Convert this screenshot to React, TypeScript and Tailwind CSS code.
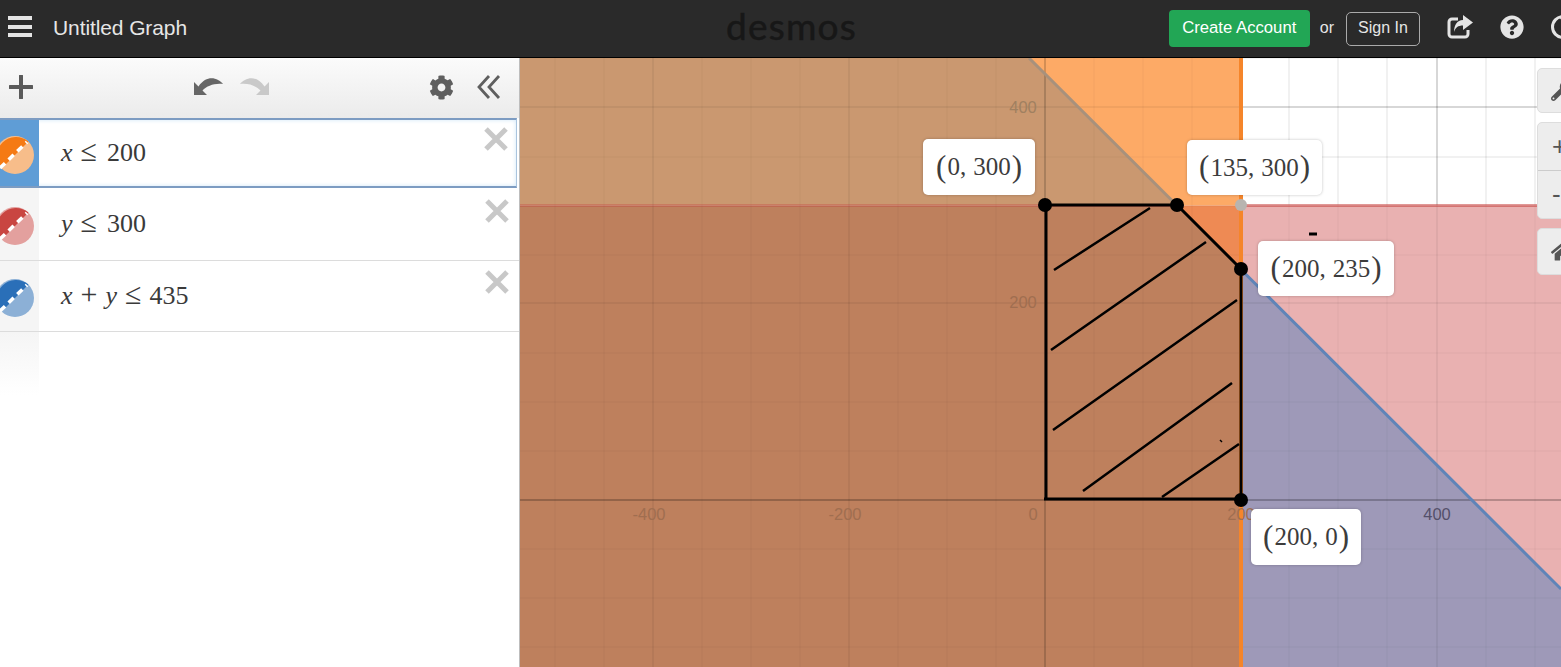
import { FaCog, FaHome, FaQuestionCircle, FaWrench } from "react-icons/fa";

const serif = "font-['Liberation_Serif',serif]";

function Swatch({ dark, light }: { dark: string; light: string }) {
  return (
    <svg width="39" height="38" viewBox="0 0 39 38" className="block">
      <circle cx="15" cy="19" r="19" fill={light} />
      <path d="M1.6 32.4A19 19 0 0 1 28.4 5.6Z" fill={dark} />
      <line x1="0" y1="32" x2="27" y2="6" stroke="#fff" strokeWidth="3.5" strokeDasharray="7 5" />
    </svg>
  );
}

function Close() {
  return (
    <svg width="26" height="26" viewBox="0 0 26 26" className="block">
      <path d="M3 3L23 23M23 3L3 23" stroke="#c8c8c8" strokeWidth="5" />
    </svg>
  );
}

function Row({ strip, dark, light, children, className, pad }: { strip: string; dark: string; light: string; children: React.ReactNode; className: string; pad: string }) {
  return (
    <div className={`flex ${className}`}>
      <div className={`w-[39px] shrink-0 flex items-center pt-[4px] ${strip}`}>
        <Swatch dark={dark} light={light} />
      </div>
      <div className={`flex-1 flex items-center pl-[22px] pb-[2px] text-[26px] text-[#3a3a3a] ${serif}`}>{children}</div>
      <div className={`w-[44px] shrink-0 ${pad}`}>
        <Close />
      </div>
    </div>
  );
}

function Op({ children }: { children: React.ReactNode }) {
  return <span className="mx-[8px] text-[30px] leading-none">{children}</span>;
}

function PointLabel({ a, b, className }: { a: string; b: string; className: string }) {
  return (
    <div className={`absolute flex items-center justify-center bg-white rounded-[5px] shadow-[0_0_3px_rgba(0,0,0,0.25)] text-[25px] text-[#3c3c3c] ${serif} ${className}`}>
      <span className="text-[31px] leading-none -translate-y-[1px]">(</span>
      <span className="ml-[1px]">{a},</span>
      <span className="ml-[7px] mr-[1px]">{b}</span>
      <span className="text-[31px] leading-none -translate-y-[1px]">)</span>
    </div>
  );
}

const vMinor = [555, 604, 702, 751, 800, 898, 947, 996, 1094, 1143, 1192, 1289, 1338, 1387, 1486, 1535];
const vMajor = [653, 849, 1241, 1437];
const hMinor = [451, 402, 353, 255, 206, 157, 58, 549, 598, 647];
const hMajor = [303, 107];

export default function App() {
  return (
    <div className="w-[1561px] h-[667px] overflow-hidden flex flex-col bg-white font-['Liberation_Sans',sans-serif]">
      <header className="h-[58px] shrink-0 flex items-center bg-[#2a2a2a] border-b border-black relative">
        <div className="w-[24px] ml-[8px] mb-[4px] flex flex-col gap-[4.5px]">
          <div className="h-[4px] bg-[#e4e4e4]" />
          <div className="h-[4px] bg-[#e4e4e4]" />
          <div className="h-[4px] bg-[#e4e4e4]" />
        </div>
        <span className="ml-[21px] mb-[2px] text-[21px] tracking-[-0.1px] text-[#e6e6e6]">Untitled Graph</span>
        <span className="absolute left-[726px] top-[3px] text-[37px] leading-[46px] tracking-[1.2px] text-[#171717] [-webkit-text-stroke:0.5px_#171717] font-['Lato',sans-serif]">desmos</span>
        <div className="ml-auto flex items-center">
          <div className="w-[141px] h-[37px] mb-[1px] flex items-center justify-center rounded-[4px] bg-[#22a655] text-white text-[16.7px]">Create Account</div>
          <span className="ml-[10px] mb-[1px] text-[16px] text-[#e6e6e6]">or</span>
          <div className="ml-[12px] w-[74px] h-[34px] pb-[1px] flex items-center justify-center rounded-[5px] border border-[#aaa] text-[16px] text-[#e6e6e6]">Sign In</div>
          <svg width="26" height="24" viewBox="0 0 26 24" className="ml-[27px] mb-[3px]">
            <path d="M11 4H5A3 3 0 0 0 2 7V19A3 3 0 0 0 5 22H18A3 3 0 0 0 21 19V15" fill="none" stroke="#e4e4e4" strokeWidth="3" />
            <path d="M16 0L26 7.5L16 15V10.5C11 10.5 8.5 12.5 7 17C7 10 10 5 16 5Z" fill="#e4e4e4" />
          </svg>
          <FaQuestionCircle className="ml-[27px] mb-[3px] text-[#e4e4e4]" size={24} />
          <svg width="10" height="24" viewBox="0 0 10 24" className="ml-[27px] mb-[3px]">
            <circle cx="12" cy="12" r="10.5" fill="none" stroke="#e4e4e4" strokeWidth="3" />
            <path d="M8 2L13 2L13 8Z" fill="#e4e4e4" />
          </svg>
        </div>
      </header>
      <main className="flex-1 flex min-h-0">
        <aside className="w-[520px] shrink-0 flex flex-col bg-white border-r border-[#bdbdbd] z-10">
          <div className="h-[60px] flex items-center bg-gradient-to-b from-[#fbfbfb] to-[#ebebeb] pb-[2px]">
            <svg width="24" height="24" viewBox="0 0 24 24" className="ml-[9px]">
              <path d="M12 1V23M1 12H23" stroke="#5a5a5a" strokeWidth="4" strokeLinecap="round" />
            </svg>
            <svg width="30" height="18" viewBox="0 0 30 18" className="ml-[160px] mb-[2px]">
              <path d="M1 5V18H14L9.5 13.5C14 9 21 6 30 7C25 1 14 -3 5.5 9.5Z" fill="#666" />
            </svg>
            <svg width="30" height="18" viewBox="0 0 30 18" className="ml-[17px] mb-[2px] -scale-x-100">
              <path d="M1 5V18H14L9.5 13.5C14 9 21 6 30 7C25 1 14 -3 5.5 9.5Z" fill="#c9c9c9" />
            </svg>
            <FaCog className="ml-[159px] text-[#5f5f5f]" size={25} />
            <svg width="24" height="26" viewBox="0 0 24 26" className="ml-[23px]">
              <path d="M12 2L2 13L12 24M22 2L12 13L22 24" fill="none" stroke="#5f5f5f" strokeWidth="2.8" />
            </svg>
          </div>
          <Row strip="bg-[#5f9dd6]" dark="#f57a14" light="#f7bd8a" className="h-[70px] mr-[2px] border-y-2 border-[#7d9cc2] border-r border-r-[#a9c4de] shadow-[inset_0_0_4px_#cfe6f7]" pad="pt-[6px] pl-[11px]">
            <span><i>x</i><Op>≤</Op><span className="ml-[2px]">200</span></span>
          </Row>
          <Row strip="bg-[#f5f5f5]" dark="#c94541" light="#e3a09e" className="h-[73px] border-b border-[#dcdcdc]" pad="pt-[10px] pl-[9px]">
            <span><i>y</i><Op>≤</Op><span className="ml-[2px]">300</span></span>
          </Row>
          <Row strip="bg-[#f5f5f5]" dark="#2a6fb8" light="#8cb0d6" className="h-[71px] border-b border-[#dcdcdc]" pad="pt-[8px] pl-[9px]">
            <span><i>x</i><Op>+</Op><i>y</i><Op>≤</Op>435</span>
          </Row>
          <div className="h-[63px] w-[39px] bg-gradient-to-b from-[#f5f5f5] to-white" />
        </aside>
        <section className="flex-1 relative overflow-hidden">
          <svg width="1041" height="609" viewBox="520 58 1041 609" className="block">
            <rect x="520" y="58" width="1041" height="609" fill="#fff" />
            <polygon points="520,58 1029,58 1177,205.5 520,205.5" fill="#ca9870" />
            <polygon points="1029,58 1241,58 1241,205.5 1177,205.5" fill="#fdaa66" />
            <polygon points="520,205.5 1177,205.5 1241,269.5 1241,667 520,667" fill="#be805d" />
            <polygon points="1177,205.5 1241,205.5 1241,269.5" fill="#ee8a54" />
            <polygon points="1241,205.5 1561,205.5 1561,589 1241,269.5" fill="#e9b1b1" />
            <polygon points="1241,269.5 1561,589 1561,667 1241,667" fill="#9e99b8" />
            {vMinor.map((x) => <line key={x} x1={x} x2={x} y1="58" y2="667" stroke="#000" strokeOpacity="0.04" />)}
            {hMinor.map((y) => <line key={y} x1="520" x2="1561" y1={y} y2={y} stroke="#000" strokeOpacity="0.04" />)}
            {vMinor.filter((x) => x > 1241).map((x) => <line key={x} x1={x} x2={x} y1="58" y2="205" stroke="#000" strokeOpacity="0.07" />)}
            {hMinor.filter((y) => y < 205).map((y) => <line key={y} x1="1243" x2="1561" y1={y} y2={y} stroke="#000" strokeOpacity="0.07" />)}
            {vMajor.map((x) => <line key={x} x1={x} x2={x} y1="58" y2="667" stroke="#000" strokeOpacity="0.1" />)}
            {hMajor.map((y) => <line key={y} x1="520" x2="1561" y1={y} y2={y} stroke="#000" strokeOpacity="0.1" />)}
            <line x1="1437" x2="1437" y1="58" y2="205" stroke="#000" strokeOpacity="0.22" />
            <line x1="1243" x2="1561" y1="107" y2="107" stroke="#000" strokeOpacity="0.22" />
            <line x1="1045" x2="1045" y1="58" y2="667" stroke="#000" strokeOpacity="0.22" strokeWidth="1.5" />
            <line x1="520" x2="1561" y1="500" y2="500" stroke="#000" strokeOpacity="0.3" strokeWidth="1.5" />
            <line x1="520" x2="1177" y1="205.5" y2="205.5" stroke="#c74440" strokeOpacity="0.35" strokeWidth="3" />
            <line x1="1241" x2="1561" y1="205.5" y2="205.5" stroke="#c74440" strokeOpacity="0.55" strokeWidth="3" />
            <line x1="1029" y1="58" x2="1177" y2="205.5" stroke="#a8917c" strokeWidth="3" />
            <line x1="1241" y1="269.5" x2="1561" y2="589" stroke="#5f84b8" strokeWidth="3" />
            <line x1="1241" x2="1241" y1="58" y2="667" stroke="#f5852a" strokeWidth="4" />
            <g fontFamily="Liberation Sans, sans-serif" fontSize="16.5" textAnchor="middle">
              <text x="649" y="520" fill="#a06e50">-400</text>
              <text x="845" y="520" fill="#a06e50">-200</text>
              <text x="1033" y="520" fill="#a06e50">0</text>
              <text x="1241" y="520" fill="#a06e50">200</text>
              <text x="1437" y="520" fill="#54506a">400</text>
              <text x="1023" y="113" fill="#a08060">400</text>
              <text x="1023" y="308" fill="#a06e50">200</text>
            </g>
            <circle cx="1241" cy="205" r="6" fill="#b8b4b0" />
            <g stroke="#000" fill="none" strokeWidth="3">
              <path d="M1046 205H1177L1241 269V500M1046 205V499M1044 499H1241" />
              <path strokeWidth="2.5" d="M1054 270L1150 208M1051 350L1206 242M1053 430L1237 300M1083 491L1232 383M1162 497L1239 444" />
              <path strokeWidth="1.5" d="M1220 440L1222 442" />
              <path d="M1309 234H1317" />
            </g>
            <g fill="#000">
              <circle cx="1045" cy="205" r="7" />
              <circle cx="1177" cy="205" r="7" />
              <circle cx="1241" cy="269" r="7" />
              <circle cx="1241" cy="500" r="7" />
            </g>
          </svg>
          <PointLabel className="left-[403px] top-[81px] w-[112px] h-[56px]" a="0" b="300" />
          <PointLabel className="left-[667px] top-[82px] w-[135px] h-[55px]" a="135" b="300" />
          <PointLabel className="left-[738px] top-[183px] w-[136px] h-[55px]" a="200" b="235" />
          <PointLabel className="left-[731px] top-[451px] w-[110px] h-[56px]" a="200" b="0" />
          <div className="absolute left-[1017px] top-[10px] w-[40px] flex flex-col gap-[9px] text-[#555]">
            <div className="h-[45px] rounded-[5px] bg-[#ededed] border border-[#ddd] flex items-center pl-[13px]"><FaWrench size={20} /></div>
            <div className="h-[97px] rounded-[5px] bg-[#ededed] border border-[#ddd] flex flex-col">
              <div className="h-[48px] border-b border-[#ccc] flex items-center pl-[14px] text-[26px]">+</div>
              <div className="flex-1 flex items-center pl-[14px] text-[26px]">-</div>
            </div>
            <div className="h-[47px] rounded-[5px] bg-[#ededed] border border-[#ddd] flex items-center pl-[13px]"><FaHome size={22} /></div>
          </div>
        </section>
      </main>
    </div>
  );
}
